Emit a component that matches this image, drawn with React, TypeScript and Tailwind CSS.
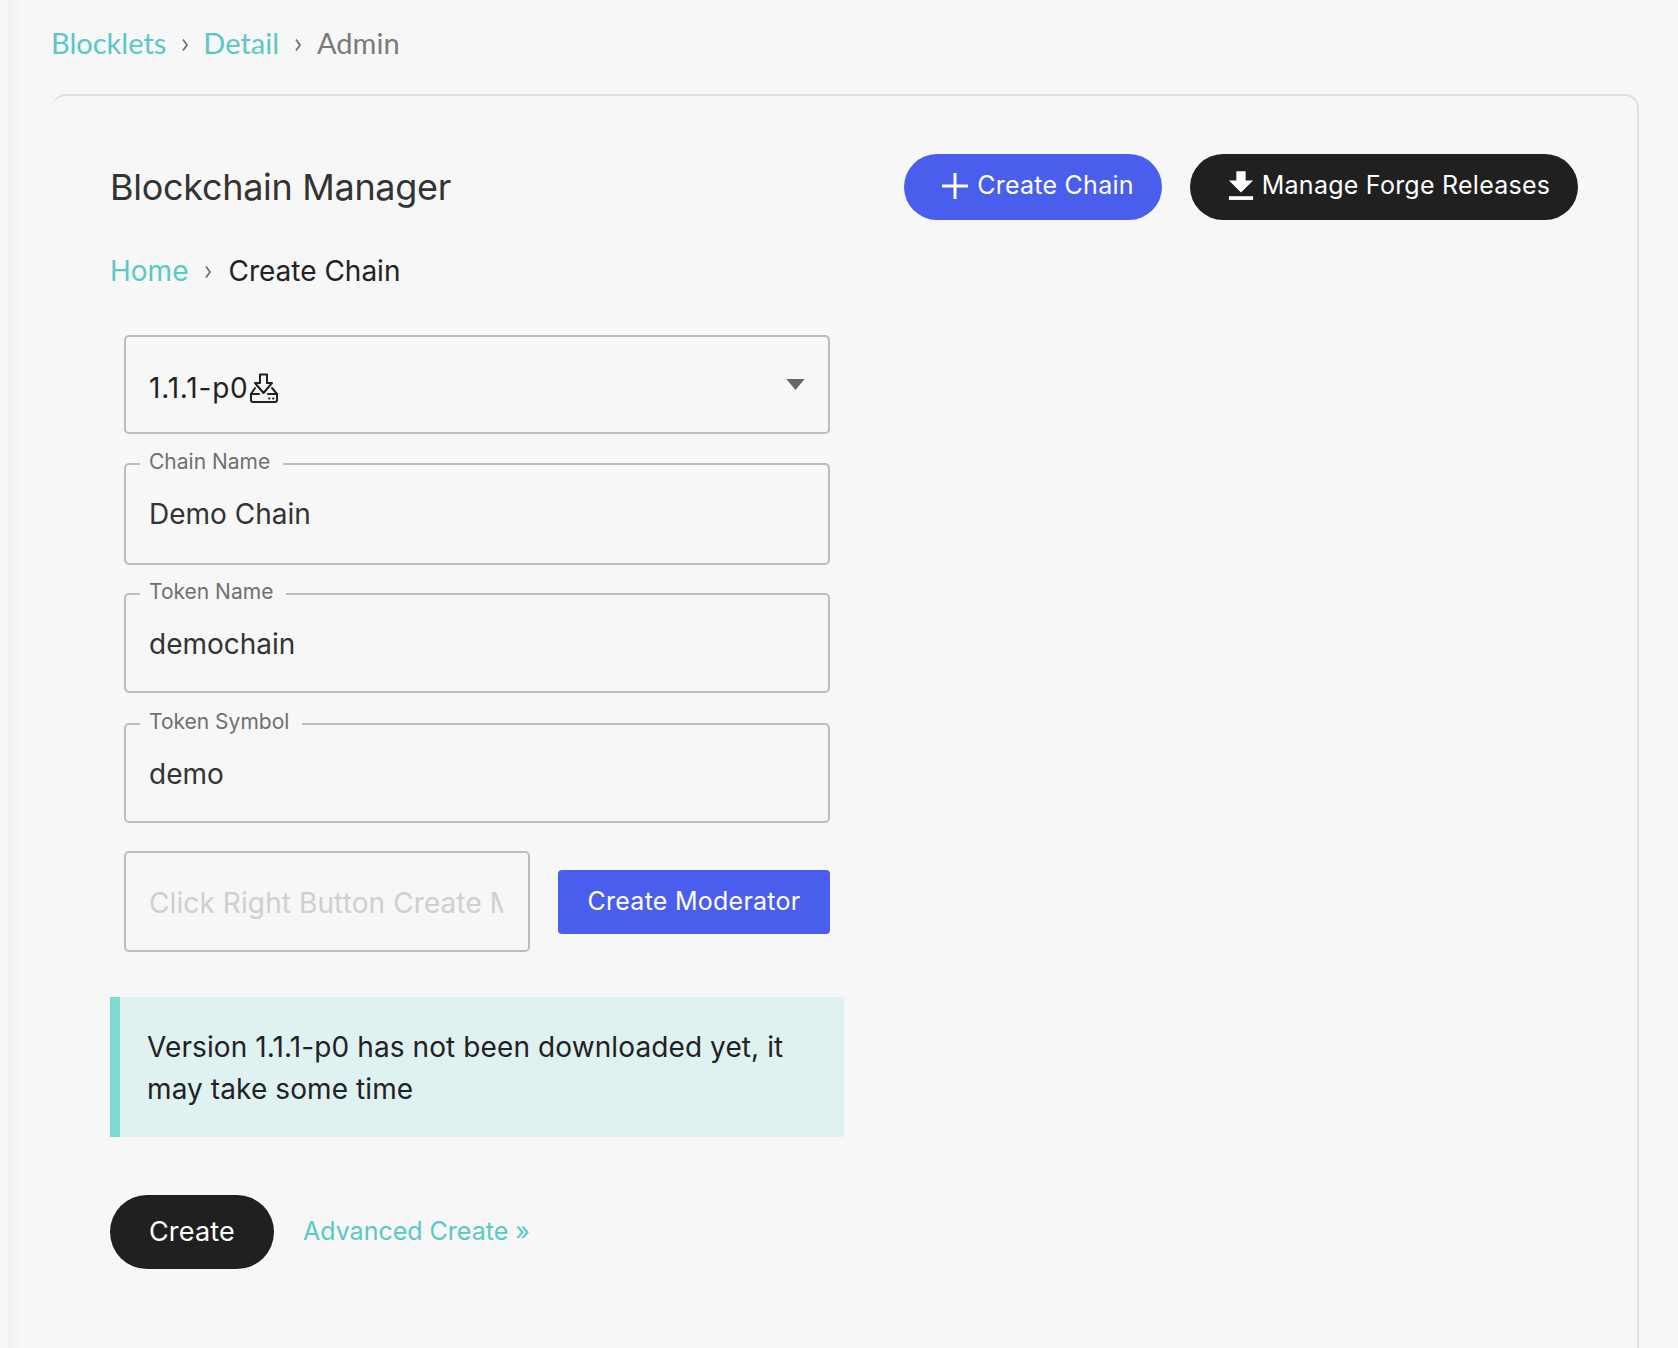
import React from 'react';

const Sep = ({ className = '' }: { className?: string }) => (
  <svg viewBox="0 0 8 14" className={`w-[8px] h-[14px] ${className}`} fill="none" stroke="#707070" strokeWidth="1.8">
    <path d="M2 1.5 L6 7 L2 12.5" />
  </svg>
);

const DownloadDisk = () => (
  <svg viewBox="0 0 30 30" className="w-[30px] h-[30px]" fill="none" stroke="#222" strokeWidth="2" strokeLinejoin="round" strokeLinecap="round">
    <path d="M11 1.5 H18 V10 H23 L14.5 20 L6 10 H11 Z" />
    <path d="M6 15 L2 21 V27 Q2 29 4 29 H26 Q28 29 28 27 V21 L23 15" />
    <path d="M2 21 H10 M19 21 H28" />
    <path d="M20 25.5 h0.5 M24 25.5 h0.5" />
  </svg>
);

const Field = ({ label, value, className }: { label: string; value: string; className: string }) => (
  <fieldset className={`border-2 border-[#bdbdbd] rounded-[5px] pl-[14px] pr-6 m-0 min-w-0 ${className}`}>
    <legend className="pl-[9px] pr-[13px] pb-[4px] text-[21px] leading-[20px] text-[#707070] font-normal">{label}</legend>
    <div className="text-[28px] leading-[36px] text-[#333] mt-[20px] ml-[9px]">{value}</div>
  </fieldset>
);

export default function App() {
  return (
    <div className="flex min-h-[1348px] h-[1348px] overflow-hidden bg-[#f7f7f7]" style={{ fontFamily: 'Inter, sans-serif' }}>
      <div className="w-[8px] shrink-0 bg-[#f6f6f6]" />
      <div className="w-[14px] shrink-0 bg-gradient-to-r from-[#f1f1f1] to-[#f7f7f7]" />
      <main className="flex-1 min-w-0 pl-[30px] pr-[39px]">
        <nav className="h-[94px] pt-[25px] -ml-px flex items-start text-[29px] leading-[36px]" style={{ fontFamily: 'Lato, sans-serif' }}>
          <a className="text-[#5ac8c4]">Blocklets</a>
          <Sep className="ml-[15px] mr-[14px] mt-[13px]" />
          <a className="text-[#5ac8c4]">Detail</a>
          <Sep className="ml-[15px] mr-[15px] mt-[13px]" />
          <span className="text-[#7a7a7a]">Admin</span>
        </nav>

        <section className="border-t-2 border-r-2 border-[#dedede] rounded-tr-[14px] rounded-tl-[14px] pl-[58px] pr-[59px] h-[1300px]">
          <div className="flex items-center justify-between mt-[58px] h-[66px]">
            <h1 className="text-[36px] font-normal text-[#333] tracking-[-0.3px]">Blockchain Manager</h1>
            <div className="flex gap-[28px]">
              <button className="h-[66px] w-[258px] pb-[3px] pl-[9px] rounded-[33px] bg-[#4a5eee] text-white text-[25px] tracking-[0.25px] flex items-center justify-center gap-[8px]">
                <svg viewBox="0 0 28 28" className="w-[28px] h-[28px]" fill="none" stroke="#fff" strokeWidth="3">
                  <path d="M14 1 V27 M1 14 H27" />
                </svg>
                Create Chain
              </button>
              <button className="h-[66px] w-[388px] pb-[3px] pl-[10px] rounded-[33px] bg-[#202020] text-white text-[25px] tracking-[0.25px] flex items-center justify-center gap-[8px]">
                <svg viewBox="0 0 28 32" className="w-[26px] h-[32px]" fill="#fff">
                  <path d="M9 0 H19 V10 H27 L14 23 L1 10 H9 Z" />
                  <rect x="1" y="27" width="26" height="4" />
                </svg>
                Manage Forge Releases
              </button>
            </div>
          </div>

          <nav className="flex items-center mt-[33px] text-[28px] leading-[36px]">
            <a className="text-[#5ac8c4]">Home</a>
            <Sep className="ml-[16px] mr-[16px] mt-[2px]" />
            <span className="text-[#222]">Create Chain</span>
          </nav>

          <div className="w-[706px] ml-[14px] mt-[46px] flex flex-col">
            <div className="h-[99px] border-2 border-[#bdbdbd] rounded-[5px] flex items-center pl-[23px] pr-[23px]">
              <span className="flex items-center text-[28px] tracking-[0.8px] text-[#222] mt-[6px]">
                1.1.1-p0
                <DownloadDisk />
              </span>
              <svg viewBox="0 0 20 12" className="w-[19px] h-[11px] ml-auto" fill="#666">
                <path d="M0 0 H20 L10 12 Z" />
              </svg>
            </div>

            <div className="flex flex-col mt-[18px]">
              <Field label="Chain Name" value="Demo Chain" className="h-[113px]" />
              <Field label="Token Name" value="demochain" className="h-[111px] mt-[17px]" />
              <Field label="Token Symbol" value="demo" className="h-[111px] mt-[19px]" />
            </div>

            <div className="flex items-center gap-[28px] mt-[28px]">
              <div className="w-[406px] h-[101px] border-2 border-[#bdbdbd] rounded-[5px] flex items-center pl-[23px] pr-[25px]">
                <div className="overflow-hidden whitespace-nowrap text-[28px] tracking-[0.1px] text-[#cfcfcf] mt-[2px]">Click Right Button Create Moderator</div>
              </div>
              <button className="w-[272px] h-[64px] rounded-[4px] bg-[#4a5eee] text-white text-[25px] tracking-[0.25px]">Create Moderator</button>
            </div>
          </div>

          <div className="w-[734px] h-[140px] mt-[45px] border-l-[10px] border-[#7ed9d2] bg-[#e0f1f1] pl-[27px] pr-[40px] pt-[29px] text-[28px] tracking-[0.1px] leading-[42px] text-[#222]">
            Version 1.1.1-p0 has not been downloaded yet, it may take some time
          </div>

          <div className="flex items-center mt-[58px]">
            <button className="w-[164px] h-[74px] rounded-[37px] bg-[#202020] text-white text-[27px] tracking-[0.2px]">Create</button>
            <a className="ml-[29px] text-[25px] text-[#5ac8c4]">Advanced Create »</a>
          </div>
        </section>
      </main>
    </div>
  );
}
